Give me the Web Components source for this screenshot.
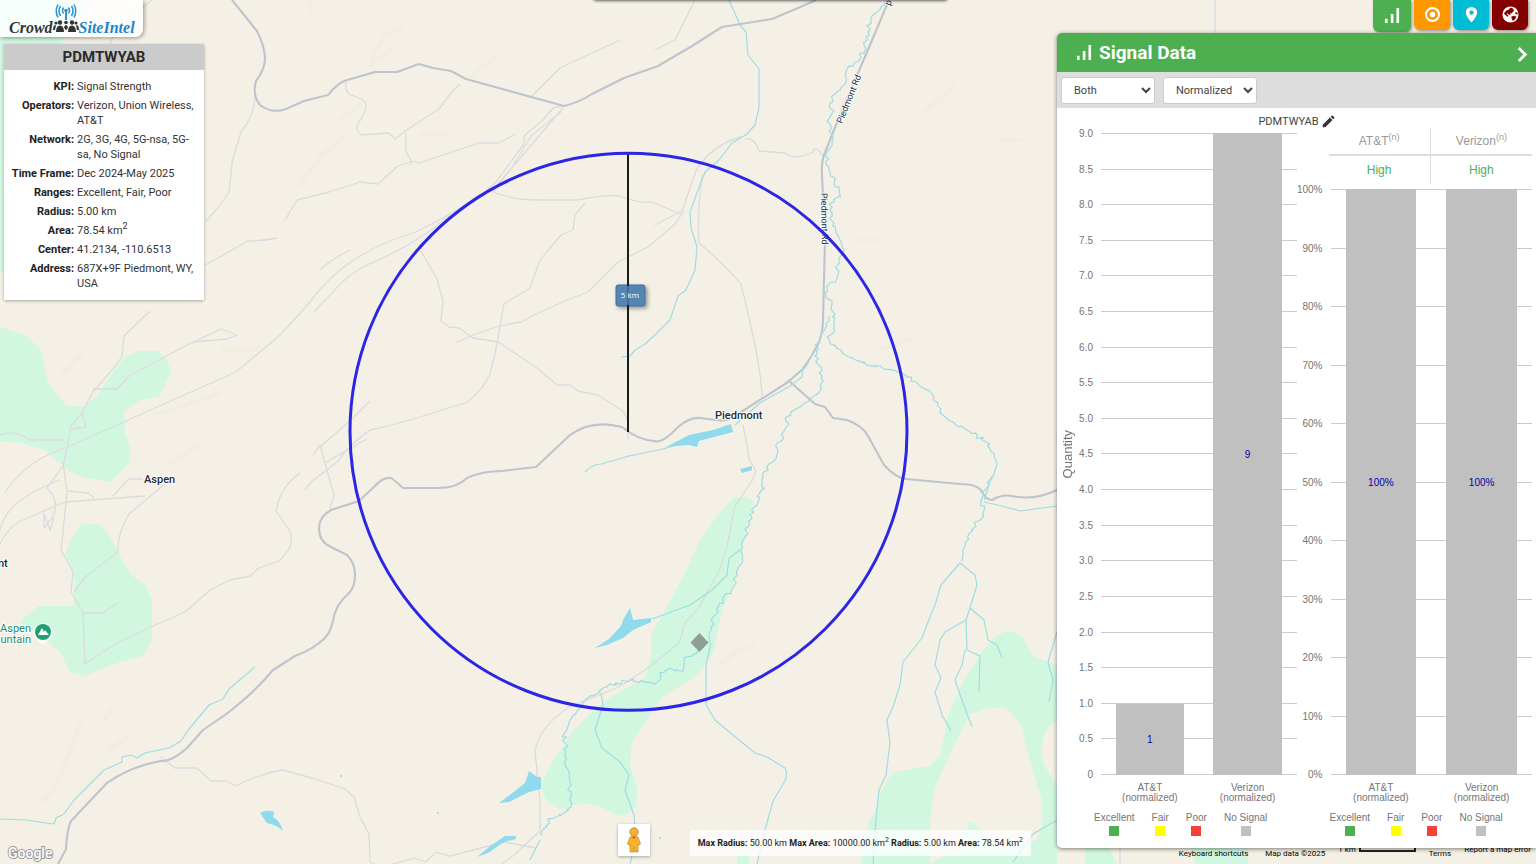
<!DOCTYPE html>
<html lang="en">
<head>
<meta charset="utf-8">
<title>CrowdSiteIntel</title>
<style>
html, body { margin: 0; height: 100%; }
body { font-family: Roboto, "Liberation Sans", sans-serif; font-size: 12px; color: #333; background: #f4f0e5; overflow: hidden; }
</style>
</head>
<body>
<site-intel-app></site-intel-app>
<script>
const define = (name, html, init) => customElements.define(name, class extends HTMLElement {
  connectedCallback() {
    if (this.shadowRoot) return;
    const root = this.attachShadow({ mode: "open" });
    root.innerHTML = typeof html === "function" ? html(this) : html;
    if (init) init(root, this);
  }
});

/* Turns the plain course of a creek into a meandering one. */
function meander(path) {
  let seed = 7;
  const rnd = () => (seed = (seed * 16807) % 2147483647) / 2147483647 - 0.5;
  const total = path.getTotalLength();
  let d = "";
  for (let s = 0; s <= total; s += 3) {
    const p = path.getPointAtLength(s);
    const x = (p.x + rnd() * 5).toFixed(1), y = (p.y + rnd() * 3).toFixed(1);
    d += (d ? "L" : "M") + x + " " + y;
  }
  path.setAttribute("d", d);
}

/* ---------- terrain map ---------- */
define("terrain-map", `
<style>
:host { display: block; overflow: hidden; }
svg { display: block; width: 100%; height: 100%; }
.veg { fill: #d2f7e0; }
.minor { fill: none; stroke: #dadbe0; stroke-width: 1.3; stroke-linejoin: round; }
.major { fill: none; stroke: #bfc4cc; stroke-width: 2.1; stroke-linejoin: round; }
.river { fill: none; stroke: #9fdce3; stroke-width: 1.2; stroke-linejoin: round; }
.lake { fill: #8fdaec; }
.hill { fill: none; stroke: #f1ede1; stroke-width: 4; stroke-linecap: round; }
text { font-family: Roboto, sans-serif; paint-order: stroke; stroke: #fff; stroke-width: 2px; stroke-linejoin: round; fill: #202a35; }
.place { font-size: 11px; font-weight: 500; }
.road { font-size: 9px; }
.poi { fill: #1c8a69; font-size: 11px; }
.tag { fill: #fff; stroke: none; font-size: 8px; font-family: "Open Sans", sans-serif; }
</style>
<svg viewBox="0 0 1536 864" preserveAspectRatio="xMidYMid slice" role="img" aria-label="Map of Piedmont, Wyoming">
  <defs>
    <filter id="sh" x="-40%" y="-40%" width="200%" height="200%"><feDropShadow dx="2" dy="2" stdDeviation="2" flood-opacity=".4"/></filter>
  </defs>
  <rect width="1536" height="864" fill="#f4f0e5"/>
  <g class="hill">
    <path d="M372 58l12-22 18-8M390 50l-20 16M300 185l20-28 24-22M420 134h25M470 76l26-18M310 0v12M150 415l30-8 40-14M222 350h35M166 465l34-20M62 375l20-22"/>
    <path d="M82 720l-14 36-12 30-14 16M104 720l8-12M108 750l20-14M925 112l30-28M860 240h20M880 350l30-10M720 665l15-12 20-8M1000 140h20M340 120l20-16"/>
  </g>
  <g class="veg">
    <path d="M0 0H90L60 44 10 50 5 273H0Z"/>
    <path d="M0 327l27 9 15 16 6 31 18 22 17 2 15-12 12-19 15-19 13-6h20l9 9 4 12-8 17-3 7-22 5-14 11 1 20 6 18-2 13-18 19-26-4-15-6-25-22-25-7-20-2Z"/>
    <path d="M80 525l17-2 11 10 12 23 11 19 15 10 6 15v40l-9 16-33 9-25 11-15-4-10-20-20-16-20-14 18-16h35l2-25-10-27 5-13Z"/>
    <path d="M733 498Q748 494 754 503L748 520 742 550 735 580 722 610 714 650Q706 668 690 680L662 697 652 712 632 742 630 765 637 788 636 805Q628 818 615 815L600 806 580 803 560 809Q544 804 541 785L553 760 565 745 570 735 585 718 610 697 645 678 651 655 651 635 668 605 685 573 700 540 715 519Z"/>
    <path fill-rule="evenodd" d="M861 864q0-28 14-54 10-32 20-38l35-6 10-10 8-40 14-32 18-30 16-18q15-9 26 0l11 20 24 9v55q-15 8-15 30 0 18 15 34v80h60l-12-25-20-15V864ZM930 864v-44l5-33 16-35 19-38q30-12 40-2l11 12 8 34 13 42v26l-6 14-20 10-20-4-18-18-8-4-4 12v8Z"/>
    <path d="M968 822l6 1 10 12-16 2ZM737 850h12v14h-12ZM1190 846h58v18h-52Z"/>
  </g>
  <g class="minor">
    <path d="M110 44l3-8 27-26 12-10M255 95q0 20-14 37l-9 30-1 13-2 17q-9 15-24 30M205 265q30-16 42-24 16 0 30-3M285 220l12-20 32-8 31-10 18 2 20-18 15-5 6 2 60-20 20 0 16-9"/>
    <path d="M346 82q-2 12 8 14 12 4 12 9 0 8-9 20 0 9 5 10l27-2 6 6 16-12 28-18 12-16 9-9M406 133v18l5 10v4M563 106l-10 2-10 12-19 16v8l-28 38q-20 20-80 50-70 20-106 70-12 14-30 33l-44 37-90 40-78 35q-40 12-63 45"/>
    <path d="M563 108l-66 77q-40 24-70 48-30 20-60 32-20 10-35 28-8 8-18 19M561 112l-30 24-18 30-20 26q20 8 45 8h40q30-6 42-4 20 8 32 6l28 12M585 203l-10 12-2 15-12 5-21 25-10 28-26 16-9 50-5 20-8 14-14 14-58 18q-20 6-40 10-20 14-33 32l-26 20-6 8M421 251l16 28 6 22-2 20 8 6 10 1 14 10 26 4M655 225l27-14 14-40q15-26 45-34M684 211l-10 14-26 22-30 15-30 30q-40 15-67 30-30 4-64 20"/>
    <path d="M497 341l40 27 20 17 13 0 8 6 20 4q15 10 25 16l5 10v18M702 175q-5 40-3 68 20 16 42 41 20 80 21 112M745 139q10-2 14 12l26 2q10 8 28-1 2-8 10 4M743 425l4 20 2 14 7 12-4 10-17 25-8 40-8 25-20 36-14 16-6 20-30 24-30 20-50 20q-30 20-34 44l5 50v30l-26 24-16 12M150 311l-26 25-2 20-5 8-24 28-12 22-10 12-4 22-4 18-16 22q14 14 5 30l-8 10 0-14 6 16 4-12M93 389h24l12-13 60-32 32-15 16 6-10 4-34 3M0 435q15-6 30 5h34M63 462l4 30-4 40-2 18 12 22-2 20 12 20 2 52 30-20 40-19 30-13 25-22 20-10 20-4 9-8 20-7q12-12 12-18v-10l-15-22q4-24 24-38M165 484q-24 20-36 30-12 20-11 38l-33 25-11 15M0 544q10-20 25-25l40-17 80-6M0 530q6-30 60-50M82 413l4 14-15 2M113 496l16-17h14M68 491l20 2 6 5M320 445l5 18 9 32-4 14M320 445l-7 10M320 447l30-26 20-20M325 463q20-12 42-24M83 613l20 0 14-10"/>
    <path d="M160 757l15 11h22l14 13h16l8 5q30-14 48-16l32 9 30 10 9 8 6 20 9 17 1 28q8 5 16 4l28-8 12 4 10-10 14 4 54-14 32 6M350 250q-20 10-30 20M620 40l-60 28-30 30M655 50l20-10 20-40M1215 0v33M1120 848v16"/>
  </g>
  <g class="major">
    <path d="M232 0l25 31q8 16 8 28 0 10-9 22-4 14 4 24 12 9 26 4l18-8 24-6q8-10 16-14l31-9 22 0 22-8 14 4 18 3 15 8 98 27q16-4 28-12l14-7 18-9 34-12 34-20 30-19 50-8 26-11 18-8"/>
    <path d="M889 0l-19 45-32 75-14 35q-3 8-2 20l3 65-2 80q0 15-6 26l-12 21-17 15-50 32q-12 8-22 6l-16-2q-10-1-22 9-16 17-24 14-16-1-32-14-30-8-52 8l-34 32-34 4q-20 0-35 7-10 10-28 10h-36q-6-6-12-10-8-1-16 8l-16 15-28 9q-12 7-12 18 0 14 12 19l16 8q8 8 8 20 0 12-6 18-14 12-16 28-3 15-14 22-10 8-24 13l-22 14q-18 22-48 45l-22 15-16 18q-16 14-26 13-30 5-54 22l-36 38q-4 8-5 28l-10 19-3 10"/>
    <path d="M788 380l27 24 10 3 8 11 14 2q16 6 21 16l16 29q12 13 22 14l54 5q18 0 22 8 4 8 10 8 10-6 20-4 22 5 45-6"/>
  </g>
  <g class="river creek">
    <path d="M888 0L880 8 870 18 865 45 860 60 848 68 843 85 832 97 831 115 828 122 833 135 828 155 828 165 836 182 838 195 830 205 832 225 840 240 843 252 838 265 835 280 826 292 833 310 836 325 829 340 845 355 870 365 890 370 905 375 930 393 937 405 950 423 970 432 985 441 998 460 990 480 983 498 983 515 975 525 963 545 960 563"/>
    <path d="M831 315L818 340 815 355 822 375 820 393 808 400 788 415 787 425 780 440 775 458 763 475 764 487 754 505 748 525 741 545 742 560 735 580 728 595 722 603 714 615 710 640 700 650 685 658 682 670 664 669 655 684 630 680 605 687 590 697 568 720 564 735 570 790 573 808 550 820 540 835"/>
  </g>
  <g class="river">
    <path d="M816 350L803 367 802 377 790 386 760 403 735 425"/>
    <path d="M729 0L740 25 746 32 748 55 759 69V108L755 125 747 134 732 143 719 160 705 172 698 190 690 212 691 228 697 247 695 270 686 290 678 296 670 320 655 335 645 344 635 350 630 356 621 357"/>
    <path d="M585 472q8-8 16-8l28-8 34-7 20-6M652 619L690 605 712 590 727 575 729 558 740 550"/>
    <path d="M711 643L706 665V705L715 720 733 735 755 753 767 757 785 768Q789 776 782 786L773 801 765 830 757 864M601 693L603 705 595 730 602 748 620 762 629 775 625 790 634 815 636 840 630 864"/>
    <path d="M960 563L941 585 935 605 928 622 922 638 903 662 900 685 893 707 887 720 890 743 886 775 879 790 875 830 873 864M960 563L975 575 977 585 970 608 984 620 988 640 997 645 1002 658M970 608L966 620 967 650 980 656 979 692M965 650L962 665 955 680 962 700 972 727M966 620L945 632 940 640 935 665 941 678 935 692 942 715 951 731M1057 632L1048 662 1053 680 1049 702M984 502q20 4 36 9l37-5M992 476l-8 24M1057 820l-24 14-20 28"/>
    <path d="M255 667l-26 22-6 10-14 6-20 24-8 12-12 7-24 5-8 5-6-3-9 2v5l-18 8-16 16-14 14-10 14-8 4-2 6-8-1-20-3-26-1M530 860l10-20"/>
  </g>
  <g class="lake">
    <path d="M666 447l23-12 24-5 18-6 2 8-34 9-2 6-8-2ZM740 469l12-3v4l-10 3ZM595 648l14-9 12-13 2-6 7-12 3 12 18-2v4l-18 8-10 8-16 7ZM499 803l16-12 10-8 4-12 8 6h4v12l-12 3-20 10ZM260 813q8-4 14-1l-1 5q8 5 10 14-6-6-16-8ZM477 857l12-10 16-11h11v3l-12 3-16 11Z"/>
    <circle cx="341" cy="776" r="1"/><circle cx="438" cy="813" r="1"/><circle cx="660" cy="838" r="1"/>
  </g>
  <text class="place" x="715" y="419">Piedmont</text>
  <text class="place" x="144" y="483">Aspen</text>
  <text class="place" x="-2" y="567">nt</text>
  <text class="poi" x="31" y="632" text-anchor="end">Aspen</text>
  <text class="poi" x="31" y="643" text-anchor="end">untain</text>
  <path d="M43 644l-6-4a9.500 9.500 0 1 1 12 0Z" fill="#fff"/><circle cx="43" cy="632" r="8" fill="#1ea074"/><path d="M38 635l4-7 2 4 1-2 4 5Z" fill="#fff"/>
  <text class="road" transform="translate(842 124) rotate(-68)">Piedmont Rd</text>
  <text class="road" transform="translate(821 193) rotate(89)">Piedmont Rd</text>
  <text class="road" transform="translate(890 6) rotate(-68)">p</text>
  <path d="M699.500 633l9 9.500-9 9.500-9-9.500Z" fill="#8f9f97"/>
  <g filter="url(#sh)"><rect x="616" y="285" width="29" height="21" rx="2" fill="#5585b3" stroke="#3f6f9e"/></g>
  <path d="M628 153V432" stroke="#1b1b1b" stroke-width="2"/>
  <rect x="617" y="286" width="27" height="19" fill="#5585b3" opacity=".75"/>
  <text class="tag" x="630" y="298" text-anchor="middle">5 km</text>
  <circle cx="628.500" cy="431.800" r="278.500" fill="none" stroke="#2c26e4" stroke-width="3"/>
</svg>`, root => root.querySelectorAll(".creek path").forEach(meander));

/* ---------- glyphs ---------- */
const GLYPHS = {
  bars: `<path d="M1 12.500h2.800V17H1zM7.200 7.500H10V17H7.200zM13.200 1H16v16h-2.800z"/>`,
  target: `<path fill-rule="evenodd" d="M9 1a8 8 0 1 1 0 16A8 8 0 0 1 9 1Zm0 2.200a5.800 5.800 0 1 0 0 11.600A5.800 5.800 0 0 0 9 3.200Z"/><circle cx="9" cy="9" r="2.800"/>`,
  pin: `<path fill-rule="evenodd" d="M9 1a6 6 0 0 1 6 6c0 4.500-6 10.500-6 10.500S3 11.500 3 7a6 6 0 0 1 6-6Zm0 3.700a2.300 2.300 0 1 0 0 4.600 2.300 2.300 0 0 0 0-4.600Z"/>`,
  globe: `<circle cx="9" cy="9" r="8.500"/><path fill="#840000" d="M8.500 2l2.500-.2.500 1.700 1.800 1-1.600 1.200-1.200 2-1.800.2.200 1.600-2.200-.5-1.200-1.800L5.500 9 7 10.500l-1 1-2.500-2L2 8l1.500-2L5 4.500 7 4ZM10 11l2.500-.8 2.500 1-.8 2.600-2.700 2-1.300-2.300ZM13.800 7l2.500-.5.400 2.500-2.200-.3Z"/>`,
  chevron: `<path d="M5 2l7 7-7 7" fill="none" stroke="currentColor" stroke-width="3"/>`,
  pencil: `<path d="M1 17v-3.500L11 3.500 14.500 7l-10 10ZM12 2.500l1.500-1.500q.8-.5 1.500 0L17 3q.5.800 0 1.500L15.500 6Z"/>`
};
define("map-glyph", el => `<style>:host{display:inline-flex;width:17px;height:17px;flex:none}svg{width:100%;height:100%;fill:currentColor}</style><svg viewBox="0 0 18 18" aria-hidden="true">${GLYPHS[el.getAttribute("name")]}</svg>`);

/* ---------- brand ---------- */
define("brand-logo", `
<style>
:host { display: flex; width: 143px; height: 37px; box-sizing: border-box; padding: 3px 0 0 9px; background: rgba(255,255,255,.85); border-radius: 0 0 8px 0; box-shadow: 1px 1px 4px rgba(0,0,0,.4); }
a { display: flex; align-items: flex-end; text-decoration: none; font: italic bold 16px/18px "Liberation Serif", serif; color: #333; }
b { color: #2385c9; }
svg { width: 26px; height: 32px; flex: none; align-self: flex-start; }
</style>
<a href="#" aria-label="CrowdSiteIntel"><span>Crowd</span>
<svg viewBox="0 0 26 32"><g fill="none" stroke="#2a92d0" stroke-width="1.500"><path d="M10.500 4.500q-2 3 0 6M15.500 4.500q2 3 0 6M7.500 3q-3 5 0 10M18.500 3q3 5 0 10M5 1.500q-3.500 6.500 0 13M21 1.500q3.500 6.500 0 13"/><path d="M13 8v9" stroke-width="2"/></g><circle cx="13" cy="7.500" r="1.800" fill="#2a92d0"/>
<g fill="#333"><circle cx="7" cy="19.500" r="2.200"/><circle cx="19" cy="19.500" r="2.200"/><circle cx="13" cy="19.500" r="1.800"/><circle cx="3" cy="20" r="1.600"/><circle cx="23" cy="20" r="1.600"/><path d="M3 29q0-6.500 4-6.500t4 6.500ZM15 29q0-6.500 4-6.500t4 6.500ZM11 24.500q.5-2.500 2-2.500t2 2.500l-2 3ZM0 27q0-5 3-5l-1 5ZM26 27q0-5-3-5l1 5Z"/></g></svg>
<b>SiteIntel</b></a>`);

/* ---------- area summary ---------- */
define("area-card", `
<style>
:host { display: block; width: 200px; height: 256px; background: #fff; box-shadow: 0 1px 3px rgba(0,0,0,.3); }
h2 { margin: 0; background: #cbcbcb; font-size: 15px; line-height: 26px; font-weight: 700; text-align: center; color: #2b2b2b; }
dl { margin: 9px 0 0; display: grid; grid-template-columns: 70px 1fr; column-gap: 3px; row-gap: 4px; line-height: 15px; font-size: 11px; }
dt { font-weight: 700; text-align: right; white-space: nowrap; color: #222; }
dd { margin: 0; padding-right: 4px; }
sup { font-size: 9px; line-height: 0; }
</style>
<h2><slot name="title"></slot></h2>
<dl>
<dt>KPI:</dt><dd>Signal Strength</dd>
<dt>Operators:</dt><dd>Verizon, Union Wireless, AT&amp;T</dd>
<dt>Network:</dt><dd>2G, 3G, 4G, 5G-nsa, 5G-sa, No Signal</dd>
<dt>Time Frame:</dt><dd>Dec 2024-May 2025</dd>
<dt>Ranges:</dt><dd>Excellent, Fair, Poor</dd>
<dt>Radius:</dt><dd>5.00 km</dd>
<dt>Area:</dt><dd>78.54 km<sup>2</sup></dd>
<dt>Center:</dt><dd>41.2134, -110.6513</dd>
<dt>Address:</dt><dd>687X+9F Piedmont, WY, USA</dd>
</dl>`);

/* ---------- bottom bar ---------- */
define("radius-bar", `
<style>
:host { display: block; background: rgba(255,255,255,.75); padding: 0 8px; font-size: 9px; line-height: 26px; white-space: nowrap; color: #222; }
sup { font-size: 7px; line-height: 0; }
</style>
<b>Max Radius:</b> 50.00 km <b>Max Area:</b> 10000.00 km<sup>2</sup> <b>Radius:</b> 5.00 km <b>Area:</b> 78.54 km<sup>2</sup>`);

define("street-view-button", `
<style>
:host { display: block; }
button { display: flex; align-items: center; justify-content: center; width: 32px; height: 32px; padding: 0; border: 0; background: #fff; box-shadow: 0 1px 3px rgba(0,0,0,.3); }
svg { width: 16px; height: 26px; }
</style>
<button aria-label="Drag Pegman onto the map to open Street View"><svg viewBox="0 0 16 26"><path d="M4 10h8l2.500 7-2 1-.5-1v8H8.600v-5H7.400v5H4v-8l-.5 1-2-1Z" fill="#f7b32b" stroke="#c98d2e" stroke-width=".8"/><circle cx="8" cy="5" r="4.200" fill="#f7b32b" stroke="#b98232" stroke-width=".8"/><path d="M5 9.500h6L8 12Z" fill="#e0632c"/></svg></button>`);

/* ---------- tabs ---------- */
define("tool-tabs", `
<style>
:host { display: flex; align-items: flex-start; gap: 3px; }
button { display: flex; align-items: center; justify-content: center; width: 36px; height: 30px; padding: 0 0 2px; border: 0; border-radius: 0 0 6px 6px; color: #fff; box-shadow: 1px 1px 3px rgba(0,0,0,.4); }
button:first-of-type { width: 38px; height: 32px; }
</style>
<button style="background:#4caf50" aria-label="Signal data"><map-glyph name="bars"></map-glyph></button>
<button style="background:#ff9800" aria-label="Radius"><map-glyph name="target"></map-glyph></button>
<button style="background:#00bcd4" aria-label="Locations"><map-glyph name="pin"></map-glyph></button>
<button style="background:#840000" aria-label="World"><map-glyph name="globe"></map-glyph></button>`);

/* ---------- charts ---------- */
define("bar-chart", el => {
  const ticks = el.getAttribute("ticks").split(",");
  const bars = JSON.parse(el.getAttribute("bars"));
  const title = el.getAttribute("axis");
  return `
<style>
:host { display: flex; flex-direction: column; min-width: 0; min-height: 0; font-family: "Liberation Sans", Arial, sans-serif; font-size: 10px; color: #757575; --gutter: ${title ? 40 : 34}px; }
.area { flex: 1; min-height: 0; display: grid; grid-template-columns: auto 1fr; }
.y { width: var(--gutter); display: flex; box-sizing: border-box; padding-right: 8px; }
.name { writing-mode: vertical-rl; transform: rotate(180deg); align-self: center; text-align: center; font-size: 13px; line-height: 14px; width: 14px; }
.ticks, .lines { flex: 1; display: flex; flex-direction: column; justify-content: space-between; }
.ticks span { height: 1px; line-height: 1px; text-align: right; }
.plot { display: grid; }
.lines, .bars { grid-area: 1 / 1; }
.lines i { height: 1px; background: #ccc; }
.bars { display: grid; grid-template-columns: 1fr 1fr; justify-items: center; align-items: end; }
.bar { width: 70%; background: #c0c0c0; display: flex; align-items: center; justify-content: center; color: #00a; }
.cats { display: grid; grid-template-columns: 1fr 1fr; margin: 8px 0 0 var(--gutter); line-height: 10px; text-align: center; }
ul { list-style: none; display: flex; gap: 17px; margin: 9px 0 0; padding: 0 0 0 33px; line-height: 12px; }
li { display: flex; flex-direction: column; align-items: center; gap: 2px; white-space: nowrap; }
li i { width: 10px; height: 10px; }
</style>
<slot></slot>
<div class="area">
  <div class="y">${title ? `<span class="name">${title}</span>` : ""}<div class="ticks">${ticks.map(t => `<span>${t}</span>`).join("")}</div></div>
  <div class="plot"><div class="lines">${ticks.map(() => "<i></i>").join("")}</div>
  <div class="bars">${bars.map(b => `<div class="bar" style="height:${b.h}%">${b.v}</div>`).join("")}</div></div>
</div>
<div class="cats">${bars.map(b => `<span>${b.n}<br>(normalized)</span>`).join("")}</div>
<ul><li>Excellent<i style="background:#4caf50"></i></li><li>Fair<i style="background:#ff0"></i></li><li>Poor<i style="background:#f44336"></i></li><li>No Signal<i style="background:#c0c0c0"></i></li></ul>`;
});

define("confidence-table", `
<style>
:host { display: block; margin: 0 0 5px 32px; }
table { width: 100%; border-collapse: collapse; table-layout: fixed; text-align: center; font-size: 12px; font-family: "Liberation Sans", Arial, sans-serif; }
th { font-weight: 400; color: #999; height: 26px; padding: 0; border-bottom: 2px solid #ddd; }
td { color: #4caf50; height: 28px; padding: 0; }
th + th, td + td { border-left: 1px solid #ddd; }
sup { font-size: 9px; line-height: 0; }
</style>
<table><thead><tr><th>AT&amp;T<sup>(n)</sup></th><th>Verizon<sup>(n)</sup></th></tr></thead><tbody><tr><td>High</td><td>High</td></tr></tbody></table>`);

/* ---------- signal panel ---------- */
define("signal-panel", `
<style>
:host { display: flex; flex-direction: column; background: #fff; border-radius: 5px 0 0 5px; overflow: hidden; box-shadow: 0 1px 4px rgba(0,0,0,.5); }
header { display: flex; align-items: center; gap: 6px; height: 39px; padding: 0 5px 0 19px; background: #4caf50; color: #fff; }
h1 { flex: 1; margin: 0; font-size: 19px; line-height: 24px; font-weight: 700; }
header button { display: flex; border: 0; padding: 4px 0 0; background: none; color: #fff; }
form { display: flex; gap: 8px; padding: 5px 4px 4px; background: #ddd; }
select { width: 94px; height: 27px; border: 1px solid #ccc; border-radius: 3px; background: #fff; color: #444; font: 12px Roboto, sans-serif; padding: 0 0 0 8px; }
.name { display: flex; justify-content: center; align-items: flex-end; gap: 3px; height: 21px; margin-bottom: -1px; font-size: 11px; line-height: 14px; color: #444; }
.name button { display: flex; border: 0; padding: 0 0 1px; background: none; color: #333; }
.name map-glyph { width: 13px; height: 13px; }
.charts { flex: 1; min-height: 0; display: grid; grid-template-columns: 1fr 1fr; padding: 0 4px 12px; }
.left { padding-top: 5px; }
select { font-size: 11px; }
</style>
<header><map-glyph name="bars"></map-glyph><h1>Signal Data</h1><button aria-label="Collapse"><map-glyph name="chevron"></map-glyph></button></header>
<form><select aria-label="Chart type"><option>Both</option></select><select aria-label="Scale"><option>Normalized</option></select></form>
<div class="name">PDMTWYAB<button aria-label="Edit name"><map-glyph name="pencil"></map-glyph></button></div>
<div class="charts">
<bar-chart class="left" axis="Quantity" ticks="9.0,8.5,8.0,7.5,7.0,6.5,6.0,5.5,5.0,4.5,4.0,3.5,3.0,2.5,2.0,1.5,1.0,0.5,0" bars='[{"n":"AT&amp;T","v":"1","h":11.1},{"n":"Verizon","v":"9","h":100}]'></bar-chart>
<bar-chart ticks="100%,90%,80%,70%,60%,50%,40%,30%,20%,10%,0%" bars='[{"n":"AT&amp;T","v":"100%","h":100},{"n":"Verizon","v":"100%","h":100}]'><confidence-table></confidence-table></bar-chart>
</div>`);

/* ---------- map attribution ---------- */
define("map-credits", `
<style>
:host { display: flex; justify-content: flex-end; padding-right: 5px; font-size: 8px; line-height: 12px; color: #000; white-space: nowrap; }
a, button { color: inherit; text-decoration: none; font: inherit; border: 0; background: none; padding: 0; }
.low { margin-top: 4px; }
.gap { margin-right: 17px; }
.gap2 { margin-right: 13px; }
.scale { display: flex; gap: 3px; }
.scale i { width: 53px; height: 4px; margin-top: 2px; border: solid #222; border-width: 0 2px 2px; }
button { align-self: flex-start; }
</style>
<button class="low gap">Keyboard shortcuts</button><span class="low gap2">Map data ©2025</span><span class="scale gap2">1 km<i></i></span><a class="low gap2" href="#">Terms</a><a href="#">Report a map error</a>`);

/* ---------- page ---------- */
define("site-intel-app", `
<style>
:host { display: grid; height: 100vh; grid-template: minmax(0,1fr) / 204px minmax(0,1fr) 479px; position: relative; overflow: hidden; }
terrain-map { position: absolute; inset: 0; }
.drawer { position: absolute; top: -9px; left: calc(50% - 175px); width: 355px; height: 9px; background: #ddd; border-radius: 4px; box-shadow: 0 1px 3px rgba(0,0,0,.6); }
aside, main, section { position: relative; display: flex; min-width: 0; }
aside, section { flex-direction: column; }
area-card { margin: 7px 0 0 4px; }
.google { margin: auto 0 2px 8px; font: 500 14px/18px Roboto, sans-serif; color: #fff; -webkit-text-stroke: 2px #999; paint-order: stroke fill; }
main { justify-content: flex-end; align-items: flex-end; gap: 40px; padding: 0 26px 8px 0; }
tool-tabs { align-self: flex-end; margin-right: 8px; height: 33px; }
signal-panel { flex: 1; min-height: 0; z-index: 1; }
map-credits { margin-top: -4px; height: 20px; }
</style>
<terrain-map></terrain-map>
<div class="drawer"></div>
<aside><brand-logo></brand-logo><area-card><span slot="title">PDMTWYAB</span></area-card><span class="google">Google</span></aside>
<main><street-view-button></street-view-button><radius-bar></radius-bar></main>
<section><tool-tabs></tool-tabs><signal-panel></signal-panel><map-credits></map-credits></section>`);
</script>
</body>
</html>
